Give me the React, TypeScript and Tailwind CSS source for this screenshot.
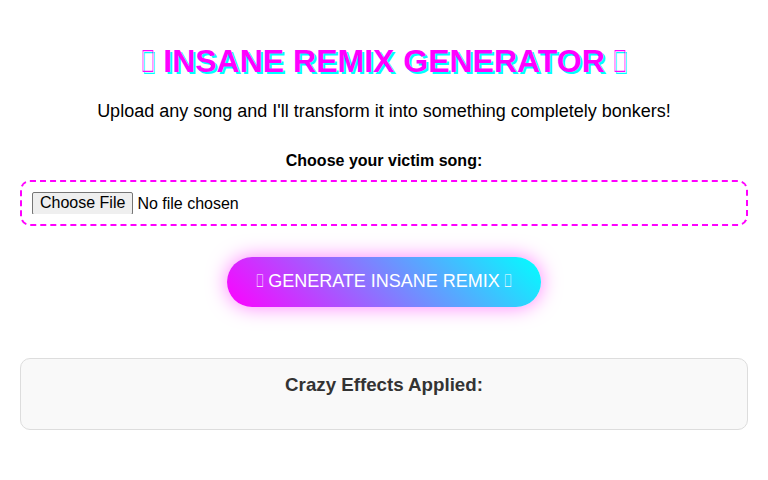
// the emoji shows as a missing-glyph box in the original; a private-use char gives the same box
const TOFU = '\u{10FFFD}';

export default function App() {
  return (
    <div className="min-h-screen bg-white p-5 font-['Liberation_Sans',Arial,sans-serif] text-black">
      <div className="mx-auto max-w-[800px]">
        {/* Title */}
        <h1 className="mt-[22.5px] mb-[21.44px] text-center text-[32px] font-bold leading-[37px] text-[#ff00ff] [text-shadow:2px_2px_#00ffff]">
          <span className="-mx-[6px] inline-block scale-x-[0.6]">{TOFU}</span> INSANE REMIX GENERATOR{' '}
          <span className="-mx-[6px] inline-block scale-x-[0.6]">{TOFU}</span>
        </h1>
        <p className="mb-[30px] text-center text-[18px] leading-[21px]">
          Upload any song and I'll transform it into something completely bonkers!
        </p>

        {/* Upload */}
        <div className="mb-[31px]">
          <label className="mb-[10px] block text-center text-base font-bold leading-[18px]">
            Choose your victim song:
          </label>
          <div className="rounded-[10px] border-2 border-dashed border-[#ff00ff] p-[10px]">
            <input
              type="file"
              accept="audio/*"
              className="block h-[22px] w-full text-base leading-[18px] file:mr-[4px] file:h-[23px] file:rounded-[2px] file:border file:border-[#767676] file:bg-[#efefef] file:px-[7px] file:text-black"
            />
          </div>
        </div>

        <div className="flex justify-center">
          <button className="h-[50px] rounded-full bg-[linear-gradient(45deg,#ff00ff,#00ffff)] px-[30px] text-[18px] text-white shadow-[0_0_20px_rgba(255,0,255,0.5)]">
            <span className="-mx-[3.5px] inline-block scale-x-[0.6]">{TOFU}</span> GENERATE INSANE REMIX{' '}
            <span className="-mx-[3.5px] inline-block scale-x-[0.6]">{TOFU}</span>
          </button>
        </div>

        {/* Results */}
        <div className="mt-[51px] rounded-[10px] border border-[#ddd] bg-[#f9f9f9] p-[15px]">
          <h3 className="mb-[18.72px] text-center text-[18.72px] font-bold leading-[21.5px] text-[#333]">
            Crazy Effects Applied:
          </h3>
        </div>
      </div>
    </div>
  );
}
